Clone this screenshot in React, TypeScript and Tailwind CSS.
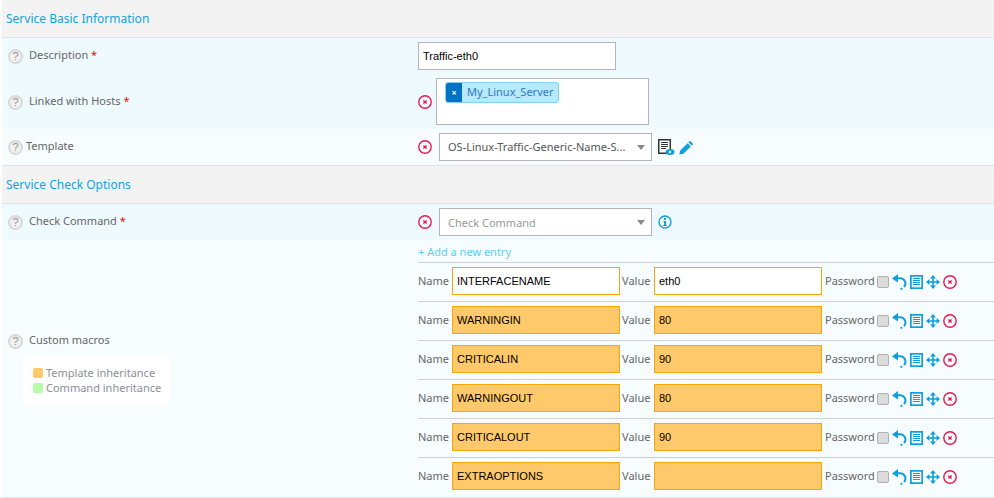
import React from "react";

const Help = () => (
  <span className="w-[15px] h-[15px] mt-[2px] rounded-full border-2 border-[#d8d8d8] bg-[#f1f1f1] text-[#8f8f8f] text-[11px] leading-[11px] flex items-center justify-center shrink-0 font-['Liberation_Sans',sans-serif]">?</span>
);

const Del = () => (
  <svg width="14" height="14" viewBox="0 0 14 14" className="shrink-0" fill="none" stroke="#e8174f">
    <circle cx="7" cy="7" r="6.2" strokeWidth="1.4" />
    <path d="M5.4 5.4l3.2 3.2M8.6 5.4l-3.2 3.2" strokeWidth="1.4" />
  </svg>
);

const Star = () => <span className="text-[#f00]"> *</span>;

const Undo = () => (
  <svg width="15" height="16" viewBox="0 0 15 16" fill="none" className="shrink-0">
    <path d="M4 4.3 H8.7 A5.2 5.2 0 0 1 12 13" stroke="#0f9fdc" strokeWidth="2" />
    <path d="M6 0 L0 4.4 L6 8.6 Z" fill="#0f9fdc" />
    <circle cx="9.4" cy="14.8" r="1.1" fill="#0f9fdc" />
  </svg>
);

const Doc = () => (
  <svg width="13" height="14" viewBox="0 0 13 14" fill="none" className="shrink-0">
    <rect x="0.85" y="0.85" width="11.3" height="12.3" stroke="#0f9fdc" strokeWidth="1.7" />
    <path d="M3 3.5h7M3 5.5h7M3 7.5h7M3 9.5h7" stroke="#0f9fdc" strokeWidth="1" />
  </svg>
);

const Move = () => (
  <svg width="14" height="14" viewBox="0 0 14 14" className="shrink-0" fill="#0f9fdc">
    <path d="M6.2 3h1.6v8H6.2zM3 6.2h8v1.6H3z" />
    <path d="M7 0l3 3.4H4zM7 14l-3-3.4h6zM0 7l3.4-3v6zM14 7l-3.4 3V4z" />
  </svg>
);

const Select = ({ text, muted }: { text: string; muted?: boolean }) => (
  <div className={`w-[213px] h-[28px] bg-white border border-[#b5b5b5] flex items-center pl-2 pr-[6px] text-[11px] ${muted ? "text-[#999]" : "text-[#555]"}`}>
    <span className={`flex-1 truncate ${muted ? "pt-[2px]" : ""}`}>{text}</span>
    <span className="w-0 h-0 border-l-[4.5px] border-r-[4.5px] border-t-[5px] border-l-transparent border-r-transparent border-t-[#888]" />
  </div>
);

const Field = ({ text, inherited }: { text: string; inherited: boolean }) => (
  <div className={`w-[168px] h-[28px] border border-[#f9a60c] flex items-center pl-1 text-[11px] text-black font-['Liberation_Sans',sans-serif] shrink-0 ${inherited ? "bg-[#fec96a]" : "bg-white"}`}>
    {text}
  </div>
);

const macros: [string, string, boolean][] = [
  ["INTERFACENAME", "eth0", false],
  ["WARNINGIN", "80", true],
  ["CRITICALIN", "90", true],
  ["WARNINGOUT", "80", true],
  ["CRITICALOUT", "90", true],
  ["EXTRAOPTIONS", "", true],
];

const Section = ({ title }: { title: string }) => (
  <div className="h-[38px] bg-[#f3f3f3] border-b border-[#e3e3e3] flex items-center pl-1 text-[12px] text-[#10a3e0]">{title}</div>
);

export default function App() {
  return (
    <div className="w-[994px] h-[498px] bg-white pl-[2px] overflow-hidden font-['Noto_Sans',sans-serif] text-[11px] text-[#666]">
      <Section title="Service Basic Information" />
      <div className="h-[91px] bg-[#effaff] flex">
        <div className="w-[416px] flex flex-col pl-[6px] pt-[10px] gap-[31px]">
          <div className="flex items-center gap-[6px] h-[15px]"><Help /><span>Description<Star /></span></div>
          <div className="flex items-center gap-[6px] h-[15px]"><Help /><span>Linked with Hosts<Star /></span></div>
        </div>
        <div className="flex flex-col pt-[4px] gap-[8px]">
          <div className="w-[198px] h-[28px] bg-white border border-[#b5b5b5] flex items-center pl-1 text-[11px] text-black font-['Liberation_Sans',sans-serif]">Traffic-eth0</div>
          <div className="flex items-center gap-[4px]">
            <Del />
            <div className="w-[213px] h-[47px] bg-white border border-[#b5b5b5] pl-2 pt-[3px]">
              <div className="w-[114px] h-[21px] rounded-[3px] border border-[#7fd4f6] bg-[#b8e9fe] flex items-center overflow-hidden">
                <span className="w-[16px] h-full bg-[#0072c6] text-white text-[9px] font-bold flex items-center justify-center">×</span>
                <span className="pl-[5px] text-[#2a7bc4]">My_Linux_Server</span>
              </div>
            </div>
          </div>
        </div>
      </div>
      <div className="h-[37px] bg-[#f7fdff] border-b border-[#e3e3e3] flex items-center">
        <div className="w-[416px] pl-[6px] mb-[2px] flex items-center gap-[3px]"><Help /><span>Template</span></div>
        <div className="flex items-center">
          <Del />
          <div className="ml-[7px]"><Select text="OS-Linux-Traffic-Generic-Name-S..." /></div>
          <svg width="17" height="17" viewBox="0 0 17 17" className="ml-[6px] shrink-0" fill="none">
            <rect x="0.75" y="0.75" width="11.5" height="13.5" fill="#fff" stroke="#333" strokeWidth="1.5" />
            <path d="M3 3.5h7M3 5.5h7M3 7.5h7M3 9.5h5" stroke="#333" />
            <ellipse cx="12" cy="13" rx="4.5" ry="3" fill="#0f9fdc" />
            <circle cx="12" cy="13" r="1.2" fill="#fff" />
          </svg>
          <svg width="15" height="15" viewBox="0 0 15 15" className="ml-[4px] shrink-0" fill="#12a0dc">
            <path d="M11 .8l3.2 3.2-1.6 1.6-3.2-3.2zM8.6 3.2l3.2 3.2-7.4 7.4L.4 14.6l.8-4z" />
          </svg>
        </div>
      </div>
      <Section title="Service Check Options" />
      <div className="h-[36px] bg-[#effaff] flex items-center">
        <div className="w-[416px] pl-[6px] mb-[2px] flex items-center gap-[6px]"><Help /><span>Check Command<Star /></span></div>
        <div className="flex items-center">
          <Del />
          <div className="ml-[7px]"><Select text="Check Command" muted /></div>
          <svg width="14" height="14" viewBox="0 0 14 14" className="ml-[6px] shrink-0" fill="none">
            <circle cx="7" cy="7" r="6" stroke="#12a0dc" strokeWidth="1.4" />
            <path d="M6 3h2v2H6zM5.5 6h2.5v4h1v1H5v-1h1V7h-.5z" fill="#12a0dc" />
          </svg>
        </div>
      </div>
      <div className="h-[258px] bg-[#f7fdff] border-b border-[#dcebf0] flex">
        <div className="w-[416px] pl-[6px] flex flex-col justify-center">
          <div className="flex items-center gap-[6px]"><Help /><span>Custom macros</span></div>
          <div className="ml-[15px] mt-[6px] w-[147px] h-[50px] bg-white rounded-[3px] pl-[10px] pt-[11px] text-[#8a8f98] flex flex-col">
            <div className="flex items-center gap-[3px] h-[15px]"><span className="w-[10px] h-[10px] mb-[2px] rounded-[2px] bg-[#fec96a]" />Template inheritance</div>
            <div className="flex items-center gap-[3px] h-[15px]"><span className="w-[10px] h-[10px] mb-[2px] rounded-[2px] bg-[#b5fba8]" />Command inheritance</div>
          </div>
        </div>
        <div className="flex-1 min-w-0">
          <div className="h-[22px] pt-[2px] flex items-center text-[#5fcdf5] text-[11px]">+ Add a new entry</div>
          {macros.map(([n, v, inh]) => (
            <div key={n} className="h-[39px] border-t border-[#d0d0d0] pb-[2px] flex items-center">
              <span className="w-[34px] shrink-0">Name</span>
              <Field text={n} inherited={inh} />
              <span className="w-[34px] pl-[2px] shrink-0">Value</span>
              <Field text={v} inherited={inh} />
              <span className="pl-[3px]">Password</span>
              <span className="ml-[2px] mt-[2px] w-[12px] h-[12px] rounded-[2px] border border-[#b0b0b0] bg-[#dcdcdc] shrink-0" />
              <div className="ml-[3px] mt-[2px] flex items-center">
                <Undo />
                <div className="ml-[3px]"><Doc /></div>
                <div className="ml-[3px]"><Move /></div>
                <div className="ml-[3px]"><Del /></div>
              </div>
            </div>
          ))}
        </div>
      </div>
    </div>
  );
}
